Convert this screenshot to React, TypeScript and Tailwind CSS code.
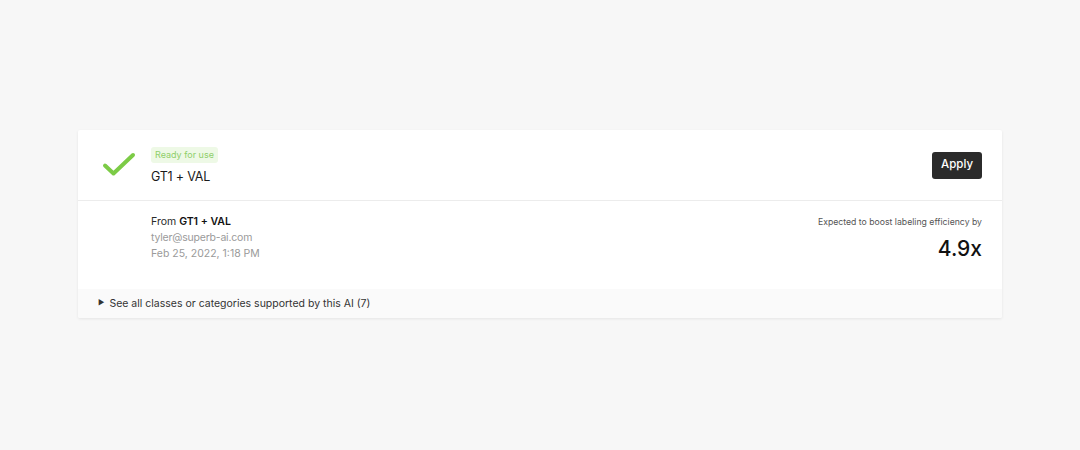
export default function App() {
  return (
    <div
      className="w-[1080px] h-[450px] bg-[#f7f7f7] pt-[130px] pl-[78px]"
      style={{ fontFamily: 'Inter, "Noto Sans", sans-serif' }}
    >
      <div className="w-[924px] bg-white rounded-[2px] shadow-[0_1px_3px_rgba(0,0,0,0.08)] overflow-hidden">
        {/* Header */}
        <div className="h-[71px] flex items-center border-b border-[#ececec] pl-[24px] pr-[20px]">
          <svg width="34" height="26" viewBox="0 0 34 26" className="mr-[15px] shrink-0">
            <path
              d="M3 13.5 L11.5 21.5 L31 3"
              fill="none"
              stroke="#7ccb46"
              strokeWidth="4"
              strokeLinecap="round"
              strokeLinejoin="round"
            />
          </svg>
          <div className="flex flex-col items-start pt-[1px]">
            <span className="bg-[#eef9e6] text-[#8fcf6a] text-[9px] leading-[16px] px-[4px] rounded-[3px]">
              Ready for use
            </span>
            <span className="text-[12.5px] tracking-[-0.2px] text-[#1a1a1a] mt-[6px] leading-[16px]">GT1 + VAL</span>
          </div>
          <div className="flex-1" />
          <button className="bg-[#2b2b2b] text-white text-[11.5px] font-medium h-[27px] px-[9px] rounded-[3px]">
            Apply
          </button>
        </div>

        {/* Body */}
        <div className="h-[88px] flex justify-between pl-[73px] pr-[20px] pt-[13px]">
          <div className="flex flex-col text-[10.5px] leading-[16px]">
            <span className="text-[#2a2a2a]">
              From <span className="font-semibold text-[#111]">GT1 + VAL</span>
            </span>
            <span className="text-[#9a9a9a] tracking-[-0.2px]">tyler@superb-ai.com</span>
            <span className="text-[#9a9a9a]">Feb 25, 2022, 1:18 PM</span>
          </div>
          <div className="flex flex-col items-end">
            <span className="text-[8.7px] text-[#555] leading-[16px]">Expected to boost labeling efficiency by</span>
            <span className="text-[21px] text-[#111] font-medium leading-[24px] mt-[7px]">4.9x</span>
          </div>
        </div>

        {/* Footer */}
        <div className="h-[29px] bg-[#fafafa] flex items-center pl-[20px]">
          <span className="text-[7px] text-[#333] mr-[5px]">▶</span>
          <span className="text-[10.5px] text-[#333]">See all classes or categories supported by this AI (7)</span>
        </div>
      </div>
    </div>
  );
}
